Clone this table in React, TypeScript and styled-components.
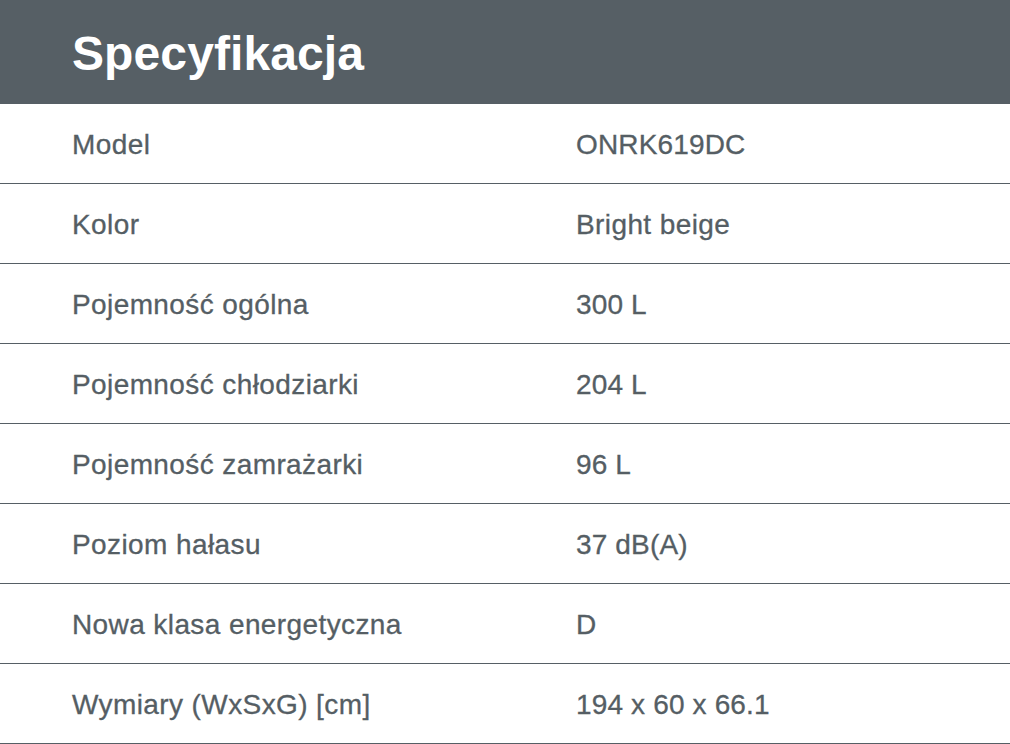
import React from "react";
import styled, { createGlobalStyle } from "styled-components";

const Global = createGlobalStyle`
  html, body { margin: 0; padding: 0; background: #ffffff; }
  body { font-family: "Liberation Sans", Arial, sans-serif; }
`;

const Page = styled.div`
  width: 1010px;
  display: flex;
  flex-direction: column;
`;

const Header = styled.header`
  height: 104px;
  background: #565f65;
  display: flex;
  align-items: center;
  padding-left: 72px;
  padding-top: 2px;
  box-sizing: border-box;
`;

const Title = styled.h1`
  margin: 0;
  color: #ffffff;
  font-size: 48px;
  font-weight: 700;
  letter-spacing: 0.1px;
`;

const Table = styled.div`
  display: flex;
  flex-direction: column;
`;

const Row = styled.div`
  height: 80px;
  box-sizing: border-box;
  border-bottom: 1px solid #565f65;
  display: grid;
  grid-template-columns: 504px 1fr;
  align-items: center;
  padding-left: 72px;
  padding-top: 3px;
`;

const Cell = styled.div<{ $wide?: boolean }>`
  color: #555e64;
  font-size: 28px;
  line-height: 32px;
  white-space: nowrap;
  letter-spacing: ${(p) => (p.$wide ? "0.4px" : "0.15px")};
  -webkit-text-stroke: 0.3px currentColor;
`;

const rows: [string, string][] = [
  ["Model", "ONRK619DC"],
  ["Kolor", "Bright beige"],
  ["Pojemność ogólna", "300 L"],
  ["Pojemność chłodziarki", "204 L"],
  ["Pojemność zamrażarki", "96 L"],
  ["Poziom hałasu", "37 dB(A)"],
  ["Nowa klasa energetyczna", "D"],
  ["Wymiary (WxSxG) [cm]", "194 x 60 x 66.1"],
];

export default function App() {
  return (
    <Page>
      <Global />
      <Header>
        <Title>Specyfikacja</Title>
      </Header>
      <Table>
        {rows.map(([k, v]) => (
          <Row key={k}>
            <Cell $wide>{k}</Cell>
            <Cell $wide={/[a-z]{3}/.test(v)}>{v}</Cell>
          </Row>
        ))}
      </Table>
    </Page>
  );
}
